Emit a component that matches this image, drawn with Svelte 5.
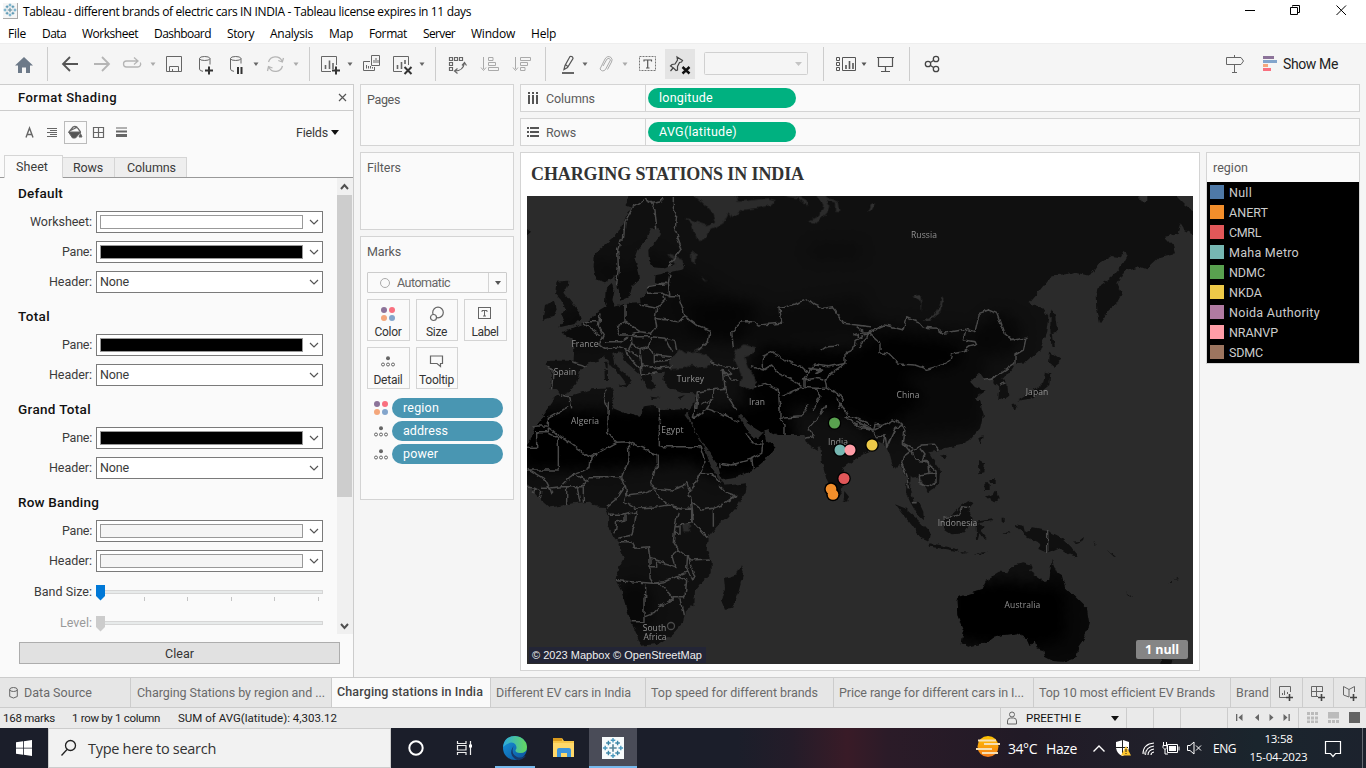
<script>
  // Tracks a label so that it fills exactly the given width in pixels.
  function fit(node, width) {
    const natural = node.getBoundingClientRect().width;
    const count = node.textContent.length;
    node.style.letterSpacing = (width - natural) / count + 'px';
  }

  const menus = [
    ['File', 18, 16], ['Data', 24, 16], ['Worksheet', 56, 16], ['Dashboard', 57, 16], ['Story', 27, 16],
    ['Analysis', 43, 16], ['Map', 24, 16], ['Format', 38, 16], ['Server', 32, 16], ['Window', 44, 16], ['Help', 25, 0]
  ];

  const sections = [
    { title: 'Default', w: 45, rows: [['Worksheet:', 62, '#fff'], ['Pane:', 30, '#000'], ['Header:', 43, null]] },
    { title: 'Total', w: 32, rows: [['Pane:', 30, '#000'], ['Header:', 43, null]] },
    { title: 'Grand Total', w: 73, rows: [['Pane:', 30, '#000'], ['Header:', 43, null]] },
    { title: 'Row Banding', w: 81, rows: [['Pane:', 30, '#f5f5f5'], ['Header:', 43, '#f5f5f5']] }
  ];

  const legend = [
    ['Null', '#4e79a7', 23], ['ANERT', '#f28e2b', 39], ['CMRL', '#e15759', 32], ['Maha Metro', '#76b7b2', 70],
    ['NDMC', '#59a14f', 36], ['NKDA', '#edc948', 33], ['Noida Authority', '#b07aa1', 91], ['NRANVP', '#ff9da7', 49], ['SDMC', '#9c755f', 34]
  ];

  const tabs = [
    ['Charging Stations by region and ...', 201, 188], ['Charging stations in India', 159, 146], ['Different EV cars in India', 155, 135],
    ['Top speed for different brands', 188, 167], ['Price range for different cars in I...', 200, 185],
    ['Top 10 most efficient EV Brands', 197, 175], ['Brand', 40, 33]
  ];

  const fields = [['region', 36, 'color'], ['address', 45, 'detail'], ['power', 35, 'detail']];

  const landNW = [
    'M320 130L300 165L325 175L308 185L295 220L270 260L240 285L210 312L206 350L215 388L240 397L268 378L275 400L285 430L285 452L312 440L320 412L345 388L338 350L328 325L337 300L365 265L378 235L405 235L404 255L385 280L370 300L372 330L385 352L420 355L450 342L480 345L478 358L430 368L392 375L390 395L408 402L370 408L365 430L348 442L350 460L300 462L270 470L262 450L268 420L260 402L242 420L240 460L245 470L225 482L205 500L180 520L150 532L112 548L118 556L140 565L145 595L143 632L70 632L65 647L80 662L76 712L95 722L105 738L130 728L155 700L165 665L190 640L220 632L240 618L255 645L285 675L305 702L320 692L300 668L268 642L262 612L285 603L305 638L340 668L360 700L378 722L392 714L382 695L380 668L420 665L415 690L430 715L470 728L512 730L514 745L505 790L1045 790L1045 130Z',
    'M95 395L130 392L128 410L118 428L142 460L165 488L170 505L155 520L103 532L120 508L108 494L125 480L108 450L90 430Z',
    'M60 465L90 452L95 478L85 500L53 510Z', 'M0 233L18 245L0 262Z', 'M320 698L305 712L280 705Z', 'M238 660h11v30h-9zM240 635h8v17h-6zM378 740L408 744L380 747ZM458 745L480 738L465 750Z',
    'M55 795L85 750L105 738L135 738L200 718L262 715L268 738L258 760L268 780L305 798Z'
  ];
  const landNE = [
    'M-20 130H940L975 165L1010 190V258L975 240L962 220L952 252L915 260L938 285L945 310L898 322L860 358L840 350L790 365L772 400L786 430L770 460L745 482L720 520L712 480L710 430L720 405L755 380L790 340L803 316L790 306L783 322L755 318L715 342L690 378L640 366L620 373L575 376L540 420L505 460L545 472L565 500L558 550L540 600L500 636L465 642L458 655L430 688L442 702L445 742L415 748L418 710L400 700L402 682L375 690L360 668L330 695L345 712L375 722L345 742L362 765L372 800L-20 800Z',
    'M573 475L586 500L592 545L578 550L585 590L574 590L571 530Z', 'M570 605L606 630L580 650L567 640Z',
    'M555 665L571 670L568 705L540 728L520 745L472 752L498 736L528 716L550 700Z', 'M455 762L470 760L466 780L458 778Z'
  ];
  const landSW = [
    'M95 -30L70 18L36 60L20 100L0 130V235L10 240L45 280L75 307L100 304L150 294L195 290L210 304L240 306L250 345L248 368L280 410L296 460L280 490L272 526L290 560L305 612L320 655L336 690L348 722L400 716L440 690L475 652L480 615L508 600L510 555L530 530L560 505L560 470L545 440L548 400L575 365L610 335L640 300L662 260L666 235L602 242L585 225L560 190L545 150L520 100L500 60L478 30L500 12L450 14L400 15L385 0L358 4L346 36L300 25L265 10L245 -30Z',
    'M505 -10L490 30L510 72L530 110L560 150L580 185L590 222L640 214L685 195L720 165L752 125L722 104L718 80L700 100L680 95L662 65L638 35L650 30L675 60L710 82L730 75L760 90L835 90L850 122L875 137L886 125L890 170L905 225L922 262L934 282L948 264L960 212L952 190L990 163L1045 130V-15Z',
    'M648 478L656 500L640 560L620 612L600 614L588 585L600 550L597 520L636 508Z', 'M958 258L972 275L966 290L956 286Z'
  ];
  const landSE = [
    'M-20 -15V155L25 140L52 108L76 120L90 152L100 190L122 180L132 197L140 230L138 262L150 290L170 325L192 346L190 320L176 290L162 288L150 258L152 215L170 212L185 228L204 262L240 235L243 200L225 175L205 142L240 135L252 130L300 121L330 105L360 70L369 30L360 -15Z',
    'M105 298L135 310L180 350L213 385L208 408L180 395L155 360L125 325Z', 'M208 415L240 420L290 432L297 440L255 432L210 425Z',
    'M250 345L280 325L305 300L325 285L340 298L325 315L335 345L315 385L275 388L255 375Z', 'M347 350L400 342L396 348L358 354L362 365L378 368L362 378L380 400L372 402L358 385L352 405H348Z',
    'M357 165L375 175L370 205L358 208Z', 'M372 235h14v20h-10zM390 222h14v12h-10zM378 275L410 260L416 280L405 293L382 280Z',
    'M465 358L490 362L495 382L520 370L570 380L600 395L630 425L655 455L630 450L600 430L565 445L535 432L542 415L500 395Z',
    'M635 410L660 408L675 396L672 406L650 414ZM700 410l10 8l-3 1zM740 435l28 20l-6 0zM798 562L820 578L808 574ZM925 537l14-6v5zM940 524l12-5v4z',
    'M290 585L300 575L365 555L380 525L420 500L445 502L460 478L490 472L517 480L510 500L555 532L568 525L575 465L590 500L605 510L615 545L650 580L680 610L687 650L675 695L655 725L650 755L610 770L580 768L555 755L550 735L530 730L525 705L510 722L500 700L470 685L430 690L395 700L380 712L325 725L305 715L312 680L292 630Z',
    'M355 100L368 94L362 120ZM240 152L262 148L250 165ZM458 0h14l-8 18zM905 762L938 765L932 782H900Z', 'M300 438l30 2l-20 3zM340 445l45 -5l-20 8zM428 335h6v18h-6zM420 385l32 -4l-10 6z'
  ];
  const waterNW = 'M500 130L540 165L562 190L570 215L545 225L515 215L478 203L500 225L505 245L520 277L545 265L555 240L592 225L610 190L620 205L650 180L692 175L740 165L752 150L730 145L640 155L630 130ZM775 138L820 145L850 170L845 150L815 135ZM875 130L895 165L885 195L848 214L875 220L905 190L913 165L905 150L930 158L930 185L943 187L938 155L905 142L900 130ZM445 620L462 597L480 610L500 605L545 612L562 635L540 655L500 645L475 655L436 657L430 642ZM500 605L525 590L535 600ZM632 600L655 583L690 592L684 610L658 622L670 652L690 685L695 712L670 722L645 705L650 680L638 650L625 625ZM498 300L515 315L512 340L498 335ZM425 310L470 325L478 345L455 350ZM528 378l18 18l-12-6z';
  const bordersNW = 'M275 405L280 350L278 300L285 270H295L300 215L325 170L365 145L390 180L395 235M365 150L380 160L410 155V138M445 138V170L455 200L450 240L470 295L430 350M435 370L430 400L435 440L415 430H365M430 400H400M415 430L420 450L395 475L345 465M435 440H460L475 480L480 500L460 515L390 505L395 475M480 500L520 530L555 545L550 575L520 600M300 465V515L345 545L380 550L395 530L390 505M225 490L220 530L235 555L225 580M300 515L275 530L285 555H320L345 545M320 555L330 560H375M240 575L285 575L310 560M220 580L240 595L285 590L310 600L320 580V560M320 580L345 600L370 590L380 560L420 565L440 605M370 590L385 615L440 620M425 565L450 572L455 600M300 605L320 630L345 655L350 680M345 600L350 640L385 655M310 600L340 620M385 615V635L440 630M385 655L440 650M350 640V675L395 665M175 520L225 555M180 515H215M140 635L185 648M68 652L85 660L80 715M555 635L600 650L640 655M595 660L600 715L520 725M590 660L620 690H640M600 680L620 672L610 662M600 715L605 735L625 765L635 780M520 725L515 780M570 720L565 745L530 765M105 735L135 740L140 775M240 720L235 745L250 780M625 595L620 545L650 515L690 515L700 525L770 520L765 475L800 465L850 448L870 465L895 475L920 470L940 495L955 520L1035 530M1035 545L990 575L985 600L960 610V640L910 650L870 645L850 670M680 650L715 660V615L740 605L780 630L830 650L850 670M690 710L720 700L760 720L765 780M715 660L740 645L760 670L800 690L830 710M770 740L830 712L870 715L905 715M850 670L835 690L870 685L895 690M840 690V710M870 670L890 660L850 655M905 715L945 735L955 750L940 780M870 715L885 735L865 780M960 640L925 665L900 690L905 715M890 600L905 590L945 588M985 555L1000 550V565M365 410L430 400';
  const bordersNE = 'M0 550L25 548L75 525L130 540L140 503L180 520L190 532L230 535L250 550L318 538L345 545L358 490L385 480L410 490L430 545L460 570L498 565L490 600L465 615V640L395 685L370 688M25 548L60 580V608L85 612L115 642L165 645L200 658L245 645L270 630L275 612L310 605L330 590L350 585L345 575L310 570L318 538M420 705L438 698M-5 590L20 565L25 548M-10 530L10 545';
  const bordersSW = 'M403 10V125H525M397 150L310 110L275 112L195 157L70 68M397 150V190H390L385 215L378 240L390 250M250 -10L248 80L275 112M90 95H100V195H5M90 95L70 85M70 68V80H35V130H5M22 63H70V40L130 5M310 112L312 160L290 215M195 157L192 190L150 205L125 225L105 245L70 250L55 220L5 190M150 205L185 230L190 215H290M125 245V300M105 245H175M155 240L165 290M190 225L175 240V290M290 215L300 240L270 285L245 305M300 240L305 265L298 290L330 310L400 305L430 300L470 310M305 270L350 265L390 250L400 275L430 300M390 250L440 255L480 240L485 230L495 265L510 235L525 205M490 265L500 290L530 315L565 310L590 300L632 272L605 262L580 240M525 205H560L585 235M525 125L540 170L525 205M500 290L505 350L548 400M470 310H500V350L460 360M565 315V365M460 320L450 365L445 410L460 435L500 465L555 462M280 410H320L330 430L370 425L375 460L440 480L450 485L440 450L460 435M250 328H300V345L275 350L270 385M300 330L335 320L330 350L320 390L280 400M375 460V485H395M395 470V485M375 485V520L385 535M275 527L385 535L420 530L455 515L490 500M362 540V580H357V650H320M385 535H405L445 580L405 605L385 625L360 635M455 515L485 525L480 575H445M490 450L500 490L510 520L500 525L485 490L488 450M465 580L475 630M450 365H465V385H450M515 -10L505 40L540 15L560 -15M540 10L600 30L640 50M685 160L620 180L585 175V190M685 195L680 160L710 145L715 105M710 118L682 116L665 85M765 -10V40L780 60V90M765 40L830 35L845 10V-5M905 0L880 35L850 70L865 95L840 100M1035 75L985 55L960 35L985 35L1035 60M935 -20L970 30M0 245L30 250L50 260L45 280M30 250L25 265M50 250H75L80 265';
  const bordersSE = 'M-10 50L40 75L100 45L125 55L135 75L130 115L160 130M-10 70L40 75L45 58L70 62M35 78L50 95L75 92L70 115M75 92L80 125L105 70L125 60M130 115L150 140L130 155L125 175L140 210L145 250M150 140L185 120L220 118L235 135M155 135L165 165L205 170L210 205H228M180 130L195 150L190 165L228 195V230L200 245L180 235L178 210L210 205M155 290H170M250 340L295 330L305 305L330 308M563 375V445';

  const places = [
    ['Russia', 924, 237.5], ['France', 585, 346.5], ['Spain', 565, 374.5], ['Turkey', 690.5, 381.5], ['Iran', 757, 405], ['China', 908, 397.5],
    ['Japan', 1037, 394.5], ['Algeria', 585, 423.5], ['Egypt', 672.5, 432.5], ['India', 838, 445], ['Indonesia', 957.5, 525.5], ['Australia', 1022.5, 608],
    ['South', 654.5, 630.5], ['Africa', 655, 640]
  ];
  const dots = [
    [834.5, 423, '#59a14f'], [840, 450, '#76b7b2'], [850, 450, '#ff9da7'], [872, 445, '#edc948'], [844, 478.5, '#e15759']
  ];
</script>

{#snippet down(x, y, color)}
  <path d="M{x - 2.5} {y - 1.5}h5l-2.5 3.5z" fill={color} stroke="none" />
{/snippet}

{#snippet fourDots()}
  <svg width="14" height="14" viewBox="0 0 14 14">
    <circle cx="3" cy="3" r="3" fill="#8c7399" /><circle cx="11" cy="3" r="3" fill="#f9707f" />
    <circle cx="3" cy="11" r="3" fill="#f4a77c" /><circle cx="11" cy="11" r="3" fill="#83a5cc" />
  </svg>
{/snippet}

{#snippet detailDots()}
  <svg width="14" height="11" viewBox="0 0 14 11">
    <circle cx="7" cy="2.2" r="2" fill="#666" />
    <g fill="none" stroke="#666"><circle cx="2" cy="8.5" r="1.5" /><circle cx="7" cy="8.5" r="1.5" /><circle cx="12" cy="8.5" r="1.5" /></g>
  </svg>
{/snippet}

{#snippet tableauMark(size)}
  <svg width={size} height={size} viewBox="0 0 24 24">
    <path d="M12 8v8M8 12h8" stroke="#59879b" stroke-width="1.8" />
    <path d="M12 1v5M9.500 3.500h5M12 18v5M9.500 20.500h5M1 12h5M3.500 9.500v5M18 12h5M20.500 9.500v5" stroke="#4a98bd" stroke-width="1.500" />
    <path d="M7 4v5M4.500 6.500h5M17 4v5M14.500 6.500h5M7 15v5M4.500 17.500h5M17 15v5M14.500 17.500h5" stroke="#3d86a6" stroke-width="1.500" />
  </svg>
{/snippet}

<div class="screen">
  <header class="titlebar">
    <span class="appicon">{@render tableauMark(14)}</span>
    <span class="t" use:fit={448}>Tableau - different brands of electric cars IN INDIA - Tableau license expires in 11 days</span>
    <svg class="wincontrols" width="126" height="22" viewBox="1240 0 126 22" fill="none" stroke="#000">
      <path d="M1245 10.500h10M1292.500 6.500V5.500h7v7h-2M1290.500 7.500h7v7h-7zM1336.500 5.500l9.500 9.500M1346 5.500L1336.500 15" />
    </svg>
  </header>

  <nav class="menubar">
    {#each menus as [label, w, gap]}
      <span style:margin-right="{gap}px"><span class="t" use:fit={w}>{label}</span></span>
    {/each}
  </nav>

  <div class="toolbar">
    <svg width="47" height="40" viewBox="0 44 47 40"><path d="M15 65.500L24 57l9 8.500h-3V73h-4v-5.500h-4V73h-4v-7.500z" fill="#6c7988" /></svg>
    <svg class="sep" width="262" height="40" viewBox="47 44 262 40" fill="none" stroke="#666">
      <path d="M78 64H63M70 57l-7 7 7 7" stroke="#555" stroke-width="1.800" />
      <path d="M94 64h15M102 57l7 7-7 7" stroke="#b5b5b5" stroke-width="1.800" />
      <path d="M138 61h-11.500a3 3 0 0 0 0 6h11a3 3 0 0 0 2.800-4.500M134 57.500l4 3.500-4 3.500" stroke="#b5b5b5" stroke-width="1.300" />
      {@render down(153, 64, '#aaa')}
      <path d="M166.500 56.500h15v15h-15zM169.500 71.500v-5h9v5M172.500 69v2.500" />
      <path d="M199.500 58.500v10.500q0 2 3.500 2.300M210 58.500v6" /><ellipse cx="204.700" cy="58.500" rx="5.200" ry="2" />
      <path d="M205 70.500h8M209 66.500v8" stroke="#333" stroke-width="2" />
      <path d="M230.500 58.500v10.500q0 2 3.500 2.300M241 58.500v5" /><ellipse cx="235.700" cy="58.500" rx="5.200" ry="2" />
      <path d="M238 67v7M241.500 67v7" stroke="#333" stroke-width="2" />
      {@render down(256, 64, '#666')}
      <path d="M268.500 62a7.300 7.300 0 0 1 13.500-1M282.500 66a7.300 7.300 0 0 1-13.500 1.500M283.500 58l-1.200 4-4-1.500M267.500 71l1-4.500 4 1.500" stroke="#b5b5b5" stroke-width="1.300" />
      {@render down(296, 64, '#aaa')}
    </svg>
    <svg class="sep" width="126" height="40" viewBox="309 44 126 40" fill="none" stroke="#666">
      <path d="M331 71.500h-9.500v-15h15V65" /><path d="M325.500 65v4M329.500 60.500v8.500M333 63v6" stroke-width="1.600" />
      <path d="M332 70.500h8M336 66.500v8" stroke="#333" stroke-width="2" />{@render down(350, 64, '#666')}
      <path d="M371.500 55.500h8v10h-8zM370 61.500h-6.500v9h11V67M374 60v3M376 58v5M378 60v3M366.500 65v3.500M368.500 66v2.500M370.500 66v2.500M372.500 67v1.500" />
      <path d="M402 71.500h-8.500v-15h15V65" /><path d="M397.500 65v4M401.500 62v7M405 60v4" stroke-width="1.600" />
      <path d="M404.500 67l7 7M411.500 67l-7 7" stroke="#333" stroke-width="2" />{@render down(422, 64, '#666')}
    </svg>
    <svg class="sep" width="110" height="40" viewBox="435 44 110 40" fill="none" stroke="#666">
      <path d="M449.500 57.500h3v3h-3zM454.500 57.500h3v3h-3zM459.500 57.500h3v3h-3zM449.500 62.500h3v3h-3zM449.500 67.500h3v3h-3zM455 71q8 0 9.500-8M457.500 68.500l-3 2.500 3 2.500M462 65.500l2.500-3 2 3" stroke-width="1.200" />
      <path d="M483.500 57v12M481 67.500l2.500 3 2.500-3M488.500 57.500h4.500v3h-4.500zM488.500 62.500h7v3h-7zM488.500 67.500h10v3h-10zM515.500 57v12M513 67.500l2.500 3 2.500-3M520.500 57.500h10v3h-10zM520.500 62.500h7v3h-7zM520.500 67.500h4.500v3h-4.500z" stroke="#aaa" />
    </svg>
    <svg class="sep" width="278" height="40" viewBox="545 44 278 40" fill="none" stroke="#555">
      <path d="M564 69.500l1-4 5-9q3-.5 3 2l-5.500 9zM566 65l2.500 2" stroke-width="1.200" /><path d="M562 73h12" stroke="#666" stroke-width="2" />{@render down(585, 64, '#666')}
      <path d="M603 66l4-7q2.500-2 3.500 1l-5 9.500q-3 3-5.500-.5l5-10q2.500-4 6-1.500 2 2 .5 4.500l-4 7.500" stroke="#aaa" />{@render down(625, 64, '#aaa')}
      <rect x="639.500" y="56.500" width="16" height="14" stroke="#777" stroke-dasharray="2 1" />
      <path d="M644 61.500v-1.500h7.500v1.500M647.700 60v8M646 68h3.500" stroke-width="1.200" />
      <rect x="665" y="49" width="30" height="30" fill="#e4e4e4" stroke="none" />
      <path d="M677 57l5.500 3.500-1 1.500-2 .5-2 4v3.500l-1.500.5-2.500-2.500-3-2 1.500-1.500 3-.5 2.500-4zM673.500 67.500l-3 3.500" stroke="#444" stroke-width="1.200" />
      <path d="M682.500 67l7 6.500M689.500 67l-7 6.500" stroke="#111" stroke-width="2.400" />
      <rect x="704.500" y="52.500" width="103" height="22" rx="1" stroke="#d0d0d0" />
      <path d="M795 62h7l-3.500 4z" fill="#c4c4c4" stroke="none" />
    </svg>
    <svg class="sep" width="86" height="40" viewBox="823 44 86 40" fill="none" stroke="#555">
      <path d="M836.500 57.500h3v3h-3zM836.500 62.500h3v3h-3zM836.500 67.500h3v3h-3zM842.500 57.500h13v13h-13z" /><path d="M846 65v4M849.500 61v8M853 63v6" stroke-width="1.600" />
      {@render down(864, 64, '#555')}
      <path d="M877 57.500h17M878.500 58v8.500h14V58M885.500 66.500v5M881 71.500h9" stroke-width="1.200" />
    </svg>
    <svg class="sep" width="51" height="40" viewBox="909 44 51 40" fill="none" stroke="#444" stroke-width="1.300">
      <circle cx="928" cy="64" r="2.700" /><circle cx="936" cy="59" r="2.700" /><circle cx="936" cy="69" r="2.700" /><path d="M930.500 62.500l3-2M930.500 65.500l3 2" />
    </svg>
    <div class="showme">
      <svg width="57" height="40" viewBox="1226 44 57 40" fill="none">
        <path d="M1234.500 55v2M1226.500 57.500h14.500l2.500 3.500-2.500 3.500h-14.500zM1234.500 64.500v8M1232 72.500h5" stroke="#666" />
        <path d="M1263 57.500h11" stroke="#8c7399" stroke-width="3" /><path d="M1263 61.500h14" stroke="#83a5cc" stroke-width="3" />
        <path d="M1263 65.500h5" stroke="#f4a77c" stroke-width="3" /><path d="M1263 69.500h8" stroke="#f9707f" stroke-width="3" />
      </svg>
      <span class="t" use:fit={55}>Show Me</span>
    </div>
  </div>

  <main class="work">
    <aside class="format">
      <div class="formathead">
        <b class="t" use:fit={99}>Format Shading</b>
        <svg width="9" height="9" viewBox="0 0 9 9"><path d="M1 1l7 7M8 1L1 8" stroke="#555" stroke-width="1.200" /></svg>
      </div>
      <div class="kinds">
        <svg width="120" height="24" viewBox="18 120 120 24" fill="none" stroke="#666">
          <path d="M26 137.500l3.500-9.500 3.500 9.500M27 134.500h5" stroke-width="1.400" />
          <path d="M47 128.500h10M50 130.500h7M47 132.500h10M50 134.500h7M47 136.500h10" />
          <rect x="64.500" y="121.500" width="22" height="22" stroke="#bbb" />
          <path d="M69 132l4-5q3-1.500 5 1.500l2.500 3.500M69.500 131l8-4" stroke-width="1.300" /><path d="M68.500 132h12.500l-5.500 6h-3z" fill="#555" /><path d="M80.500 133.500l1.500 3.500h-3z" fill="#555" />
          <path d="M93.500 127.500h10v10h-10zM98.500 127.500v10M93.500 132.500h10" stroke-width="1.200" />
          <path d="M116 128h11" /><path d="M116 131.500h11" stroke-width="2" /><path d="M116 135.500h11" stroke-width="3" />
        </svg>
        <span class="fieldsmenu"><span class="t" use:fit={32}>Fields</span><i></i></span>
      </div>
      <div class="ptabs">
        <span class="ptab on"><span class="t" use:fit={32}>Sheet</span></span>
        <span class="ptab rowstab"><span class="t" use:fit={30}>Rows</span></span>
        <span class="ptab colstab"><span class="t" use:fit={49}>Columns</span></span>
      </div>
      <div class="scroller">
        <div class="settings">
          {#each sections as s}
            <h3><span class="t" use:fit={s.w}>{s.title}</span></h3>
            {#each s.rows as [label, w, fill]}
              <div class="setting">
                <label><span class="t" use:fit={w}>{label}</span></label>
                <div class="combo">
                  {#if fill}<i style:background={fill}></i>{:else}<span class="t" use:fit={29}>None</span>{/if}
                  <svg width="10" height="6" viewBox="0 0 10 6"><path d="M1 1l4 4 4-4" fill="none" stroke="#555" stroke-width="1.200" /></svg>
                </div>
              </div>
            {/each}
          {/each}
          <div class="slide">
            <label><span class="t" use:fit={58}>Band Size:</span></label>
            <svg width="227" height="31" viewBox="96 580 227 31"><rect x="96.500" y="590.500" width="226" height="3" fill="#e7eaea" stroke="#d6d6d6" /><path d="M96 585h9v11l-4.500 4.500L96 596z" fill="#0078d7" /><path d="M144.500 597v4M187.500 597v4M231.500 597v4M274.500 597v4M318.500 597v4" stroke="#c4c4c4" /></svg>
          </div>
          <div class="slide off">
            <label><span class="t" use:fit={32}>Level:</span></label>
            <svg width="227" height="31" viewBox="96 580 227 31"><rect x="96.500" y="590.500" width="226" height="3" fill="#e7eaea" stroke="#d6d6d6" /><path d="M96 585h9v11l-4.500 4.500L96 596z" fill="#ccc" /></svg>
          </div>
        </div>
        <div class="bar">
          <svg width="16" height="17" viewBox="0 0 16 17"><path d="M4 11l3.500-4 3.500 4" fill="none" stroke="#505050" stroke-width="2" /></svg>
          <i></i>
          <svg width="16" height="17" viewBox="0 0 16 17"><path d="M4 7l3.500 4L11 7" fill="none" stroke="#505050" stroke-width="2" /></svg>
        </div>
      </div>
      <button class="clear"><span class="t" use:fit={29}>Clear</span></button>
    </aside>

    <section class="cards">
      <div class="card pages"><span class="t" use:fit={33}>Pages</span></div>
      <div class="card filters"><span class="t" use:fit={34}>Filters</span></div>
      <div class="card marks">
        <div class="markstitle"><span class="t" use:fit={34}>Marks</span></div>
        <div class="marktype"><i></i><span class="t" use:fit={53}>Automatic</span><em></em></div>
        <div class="markgrid">
          <div><span class="ic">{@render fourDots()}</span><span class="t" use:fit={27}>Color</span></div>
          <div><span class="ic"><svg width="16" height="16" viewBox="0 0 16 16" fill="none" stroke="#666" stroke-width="1.200"><circle cx="9" cy="6.500" r="5.300" /><circle cx="4.500" cy="11.500" r="3" fill="#fafafa" /></svg></span><span class="t" use:fit={21}>Size</span></div>
          <div><span class="ic"><svg width="14" height="13" viewBox="0 0 14 13" fill="none" stroke="#666"><rect x=".5" y=".5" width="12" height="11" /><path d="M4 5V3.500h5V5M6.500 3.500v5.500M5 9h3" /></svg></span><span class="t" use:fit={27}>Label</span></div>
          <div><span class="ic">{@render detailDots()}</span><span class="t" use:fit={29}>Detail</span></div>
          <div><span class="ic"><svg width="15" height="13" viewBox="0 0 15 13" fill="none" stroke="#666" stroke-width="1.200"><path d="M1.500 1h12v7.500h-2v3l-3.500-3H1.500z" /></svg></span><span class="t" use:fit={35}>Tooltip</span></div>
        </div>
        {#each fields as [name, w, kind]}
          <div class="field">
            <span>{#if kind === 'color'}{@render fourDots()}{:else}{@render detailDots()}{/if}</span>
            <div class="pill blue"><span class="t" use:fit={w}>{name}</span></div>
          </div>
        {/each}
      </div>
    </section>

    <section class="viz">
      <div class="shelf">
        <div class="shelfname"><svg width="12" height="12" viewBox="0 0 12 12" stroke="#555" stroke-width="2"><path d="M2 0v2M6 0v2M10 0v2M2 3v9M6 3v9M10 3v9" /></svg><span class="t" use:fit={49}>Columns</span></div>
        <div class="pill green"><span class="t" use:fit={54}>longitude</span></div>
      </div>
      <div class="shelf">
        <div class="shelfname"><svg width="12" height="12" viewBox="0 0 12 12" stroke="#555" stroke-width="2"><path d="M0 2h2M0 6h2M0 10h2M3 2h9M3 6h9M3 10h9" /></svg><span class="t" use:fit={30}>Rows</span></div>
        <div class="pill green"><span class="t" use:fit={78}>AVG(latitude)</span></div>
      </div>
      <div class="canvas">
        <div class="sheet">
          <h1><span class="t" use:fit={273}>CHARGING STATIONS IN INDIA</span></h1>
          <div class="map">
            <svg width="666" height="468" viewBox="527 196 666 468">
              <defs>
                <clipPath id="land">
                  {#each landNW as d}<path {d} transform="translate(525 150) scale(.33333)" />{/each}
                  {#each landNE as d}<path {d} transform="translate(860 150) scale(.33333)" />{/each}
                  {#each landSW as d}<path {d} transform="translate(525 405) scale(.33333)" />{/each}
                  {#each landSE as d}<path {d} transform="translate(860 405) scale(.33333)" />{/each}
                </clipPath>
                <filter id="rough" filterUnits="userSpaceOnUse" x="507" y="176" width="706" height="508" color-interpolation-filters="sRGB">
                  <feTurbulence type="fractalNoise" baseFrequency=".16" numOctaves="2" seed="4" result="n" />
                  <feDisplacementMap in="SourceGraphic" in2="n" scale="5" xChannelSelector="R" yChannelSelector="G" />
                </filter>
                <filter id="soft" x="-30%" y="-30%" width="160%" height="160%"><feGaussianBlur stdDeviation="7" /></filter>
              </defs>
              <rect x="527" y="196" width="666" height="468" fill="#2b2b2b" />
              <g filter="url(#rough)">
                <g clip-path="url(#land)">
                  <rect x="500" y="170" width="720" height="520" fill="#101010" />
                  <g filter="url(#soft)" fill="#000">
                    <path d="M520 410H720L790 400 800 470 720 480 690 462 600 470H520Z" />
                    <path d="M760 345L850 350L890 335L960 345L960 365L900 375L925 400L880 430L820 410L740 400Z" opacity=".9" />
                    <ellipse cx="1000" cy="335" rx="22" ry="22" opacity=".5" />
                    <path d="M950 585L1010 580L1065 590L1065 640L1020 650L950 640Z" />
                    <path d="M1040 560L1095 590L1095 670L1030 670Z" opacity=".5" />
                    <path d="M690 305L760 300L740 345L690 335Z" opacity=".55" />
                    <path d="M810 245h50v12h-50zM590 260h30v20h-30zM680 300h60v12h-60z" opacity=".3" />
                    <ellipse cx="635" cy="605" rx="18" ry="25" opacity=".5" />
                    <path d="M650 250L760 310L860 295L880 335L560 350L560 320Z" opacity=".3" />
                    <path d="M860 320L990 330L980 430L860 440Z" opacity=".4" />
                  </g>
                </g>
                <path d={waterNW} transform="translate(525 150) scale(.33333)" fill="#2b2b2b" />
                <path d="M245 440L252 452L240 485L215 507L190 514L222 492L238 468ZM22 185L30 165L45 160L35 178ZM160 440L182 435L185 488L178 450ZM834 135H862V152L845 155Z" transform="translate(860 150) scale(.33333)" fill="#303030" />
                <path d="M470 355h25v25h-20z" transform="translate(525 405) scale(.33333)" fill="#2b2b2b" />
                <g fill="none" stroke="#4a4a4a" stroke-width="4.400" stroke-linejoin="round">
                  <path d={bordersNW} transform="translate(525 150) scale(.33333)" />
                  <path d={bordersNE} transform="translate(860 150) scale(.33333)" />
                  <path d={bordersSW} transform="translate(525 405) scale(.33333)" />
                  <path d={bordersSE} transform="translate(860 405) scale(.33333)" />
                </g>
              </g>
              <circle cx="671" cy="626" r="3.500" fill="none" stroke="#4a4a4a" stroke-width="1.300" />
              <g class="places">{#each places as [name, x, y]}<text {x} {y}>{name}</text>{/each}</g>
              <circle cx="835.500" cy="423" r="5" fill="#b07aa1" />
              {#each dots as [x, y]}<circle cx={x} cy={y} r="6.800" fill="#000" />{/each}
              <g fill="#000"><circle cx="831" cy="489" r="6.800" /><circle cx="833" cy="494.500" r="6.800" /></g>
              {#each dots as [x, y, c]}<circle cx={x} cy={y} r="5.500" fill={c} />{/each}
              <g fill="#f28e2b"><circle cx="831" cy="489" r="5.300" /><circle cx="833" cy="494.500" r="5.300" /></g>
            </svg>
            <span class="credit"><span class="t" use:fit={170}>© 2023 Mapbox © OpenStreetMap</span></span>
            <span class="nulls"><span class="t" use:fit={34}>1 null</span></span>
          </div>
        </div>
        <div class="legend">
          <div class="legendhead"><span class="t" use:fit={35}>region</span></div>
          <ul>
            {#each legend as [name, color, w]}<li><i style:background={color}></i><span class="t" use:fit={w}>{name}</span></li>{/each}
          </ul>
        </div>
      </div>
    </section>
  </main>

  <nav class="sheets">
    <div class="source"><svg width="9" height="12" viewBox="0 0 9 12" fill="none" stroke="#666"><ellipse cx="4.500" cy="2.500" rx="3.800" ry="2" /><path d="M.7 2.500v7q3.800 3 7.600 0v-7" /></svg><span class="t" use:fit={68}>Data Source</span></div>
    {#each tabs as [name, width, w], i}
      <div class="stab" class:on={i === 1} class:first={i === 0} style:width="{width}px"><span class="t" use:fit={w}>{name}</span></div>
    {/each}
    <div class="new"><svg width="16" height="16" viewBox="0 0 16 16" fill="none" stroke="#666"><path d="M8 12.500H1.500v-11h11V7M4.500 8v2M6.500 5.500V10M9.500 7v2" /><path d="M8 12.500h7M11.500 9v7" stroke="#444" stroke-width="1.600" /></svg></div>
    <div class="new"><svg width="16" height="16" viewBox="0 0 16 16" fill="none" stroke="#666"><path d="M8 11.500H1.500v-10h11V7M6.500 1.500v10M1.500 6.500h11" /><path d="M8 12.500h7M11.500 9v7" stroke="#444" stroke-width="1.600" /></svg></div>
    <div class="new"><svg width="16" height="16" viewBox="0 0 16 16" fill="none" stroke="#666"><path d="M7 12l-5.500-2V1.500l5.500 3 5.500-3V7M7 4.500V12" /><path d="M8 12.500h7M11.500 9v7" stroke="#444" stroke-width="1.600" /></svg></div>
  </nav>

  <footer class="status">
    <span class="s1"><span class="t" use:fit={52}>168 marks</span></span>
    <span class="s2"><span class="t" use:fit={88}>1 row by 1 column</span></span>
    <span class="s3"><span class="t" use:fit={159}>SUM of AVG(latitude): 4,303.12</span></span>
    <div class="user"><svg width="12" height="14" viewBox="0 0 12 14" fill="none" stroke="#666"><circle cx="6" cy="3.500" r="2.500" /><path d="M1.500 13V10q0-3 3-3h3q3 0 3 3v3z" /></svg><span class="t" use:fit={55}>PREETHI E</span><i></i></div>
    <div class="cell"></div><div class="cell"></div><div class="cell wide"></div>
    <svg width="138" height="20" viewBox="1228 708 138 20" fill="#666">
      <path d="M1236 714h1.300v7H1236zM1242.500 714v7l-4-3.500zM1259 714v7l-4-3.500zM1269.500 714v7l4-3.500zM1283.500 714v7l4-3.500zM1288.500 714h1.300v7h-1.300z" />
      <path d="M1298.500 708v20" stroke="#ccc" />
      <path d="M1307 712h3v3h-3zM1311 712h3v3h-3zM1315 712h3v3h-3zM1307 716.500h3v3h-3zM1311 716.500h3v3h-3zM1315 716.500h3v3h-3zM1307 720.500h3v2.500h-3zM1311 720.500h3v2.500h-3zM1315 720.500h3v2.500h-3zM1328 712h11v6.500h-11zM1328 720h3v3h-3zM1332 720h3v3h-3zM1336 720h3v3h-3z" fill="#bbb" /><path d="M1349 712h11v11h-11z" fill="#636363" />
    </svg>
  </footer>

  <div class="taskbar">
    <svg width="48" height="40" viewBox="0 728 48 40"><path d="M16 742.300l7-1v6.400h-7zM23.800 741.200l8.200-1.200v7.700h-8.200zM16 748.500h7v6.300l-7-1zM23.800 748.500H32v7.500l-8.200-1.200z" fill="#fff" /></svg>
    <div class="search"><svg width="20" height="20" viewBox="0 0 20 20" fill="none" stroke="#222" stroke-width="1.300"><circle cx="11.500" cy="7.500" r="5" /><path d="M8 11.500L2.500 17.500" /></svg><span class="t" use:fit={128}>Type here to search</span></div>
    <svg width="198" height="40" viewBox="391 728 198 40" fill="none">
      <circle cx="416" cy="748" r="6.700" stroke="#fff" stroke-width="2" />
      <path d="M457.500 741v2.500h8.500V741M457.500 755v-2.500h8.500v2.500M457.500 745.500h8.500v4.500h-8.500zM470.500 741v14" stroke="#eee" stroke-width="1.200" /><path d="M469 744.500h3v3h-3z" fill="#fff" />
      <defs>
        <linearGradient id="edgeTop" x1="0" x2="1"><stop offset="0" stop-color="#2caae0" /><stop offset="1" stop-color="#65d85c" /></linearGradient>
        <linearGradient id="edgeLow" x1="0" y1="0" x2="1" y2="1"><stop offset="0" stop-color="#1797dc" /><stop offset="1" stop-color="#0c4f9a" /></linearGradient>
      </defs>
      <circle cx="515" cy="748" r="12" fill="url(#edgeLow)" />
      <path d="M503 747q1-11 12-11 11 1 12 11 0 6-7 6-5 0-4.500-3 2-2 0-5.500-4-5-12.500 2.500z" fill="url(#edgeTop)" />
      <path d="M513.500 746q-3 8 3.500 11 4 1.500 8-1 1.300-1 0 1-5 5-10 2-7-5-1.500-13z" fill="#17386b" />
      <path d="M495 767h40" stroke="#76b9ed" stroke-width="2" />
      <path d="M553 738h9l2 3h10v16h-21z" fill="#f7c648" /><path d="M553 738h9v3h-9z" fill="#d99a1e" /><path d="M553 743h21v14h-21z" fill="#ffd869" /><path d="M557 757v-7q0-2 2-2h10q2 0 2 2v7h-4v-4h-6v4z" fill="#3d94db" />
    </svg>
    <div class="active"><span>{@render tableauMark(22)}</span></div>
    <div class="tray">
      <svg width="26" height="24" viewBox="975 736 26 24"><defs><linearGradient id="sun" x1="0" y1="0" x2="0" y2="1"><stop offset="0" stop-color="#ffc400" /><stop offset="1" stop-color="#f47a1a" /></linearGradient></defs><circle cx="988" cy="746.500" r="10.500" fill="url(#sun)" /><path d="M978 740.500h18M984 744h16M976 749h16M982 753h16" stroke="#f6dfb4" stroke-width="1.800" /></svg>
      <span class="temp"><span class="t" use:fit={29}>34°C</span></span>
      <span class="haze"><span class="t" use:fit={31}>Haze</span></span>
      <svg width="120" height="24" viewBox="1090 736 120 24" fill="none" stroke="#fff">
        <path d="M1093.500 751.500l5.500-5.500 5.500 5.500" stroke-width="1.400" />
        <path d="M1116 742l7-2 6 2v6q-1 6-6.500 8-5.500-2-6.500-8z" fill="#fff" stroke="none" /><path d="M1122.500 740v15M1116 747.500h12" stroke="#222" /><path d="M1126 746l5 9.500h-10z" fill="#ffc62e" stroke="none" /><path d="M1126 749v3M1126 753v1" stroke="#222" />
        <path d="M1143 754q0-10 11-11M1145.500 755q0-8 8.500-9M1148 755q0-5 6-6M1151 755q0-2.500 3-3" stroke-width="1.100" /><path d="M1143.500 754l2-4v5z" fill="#aaa" stroke="none" />
        <path d="M1167.500 744.500h10v8h-10zM1179 746.500v4M1163.500 742v3M1166.500 742v3M1163 745.500h4v2l-2 2-2-2zM1165 749v5h3" /><path d="M1169 746h7v5h-7z" fill="#fff" stroke="none" />
        <path d="M1187.500 745.500h2.500l4-3.500v12l-4-3.500h-2.500zM1196 745.500l5 5M1201 745.500l-5 5" />
      </svg>
      <span class="lang"><span class="t" use:fit={23}>ENG</span></span>
      <span class="clock"><span class="t" use:fit={28}>13:58</span><span class="t" use:fit={58}>15-04-2023</span></span>
      <svg width="52" height="40" viewBox="1314 728 52 40" fill="none"><path d="M1325.500 741.500h15v12h-5l-2.500 3-2.500-3h-5z" stroke="#fff" stroke-width="1.200" /><path d="M1362.500 728v40" stroke="#666a72" /></svg>
    </div>
  </div>
</div>

<style>
  :global(body) { background: #f5f5f5; overflow: hidden; }
  .screen { width: 1366px; height: 768px; display: flex; flex-direction: column; overflow: hidden; font: 12px Roboto, "Open Sans", sans-serif; color: #3a3a3a; box-sizing: border-box; }
  .screen :where(*) { box-sizing: border-box; }
  svg { display: block; flex: none; }
  .t { display: inline-block; white-space: nowrap; flex: none; }
  .titlebar { height: 22px; background: #fff; display: flex; align-items: center; color: #000; font-family: "Open Sans", sans-serif; padding-left: 3px; }
  .titlebar > .t { padding-top: 1px; }
  .appicon { width: 15px; height: 16px; border-right: 1px solid #aaa; border-bottom: 1px solid #aaa; background: #f5f5f5; margin: 0 5px 0 0; }
  .wincontrols { margin-left: auto; }
  .menubar { height: 21px; background: #fff; display: flex; align-items: center; padding: 2px 0 0 8px; color: #000; font-family: "Open Sans", sans-serif; }
  .menubar > span { display: flex; line-height: 19px; }
  .toolbar { height: 41px; background: #f5f5f5; border-top: 1px solid #eee; display: flex; }
  .sep { background: linear-gradient(#ccc, #ccc) 0 3px / 1px 34px no-repeat; }
  .showme { margin-left: auto; margin-right: 28px; display: flex; align-items: center; height: 40px; font-size: 14px; color: #222; }
  .work { height: 593px; display: flex; gap: 6px; background: #f5f5f5; }
  .format { width: 354px; height: 593px; background: #fafafa; border-top: 1px solid #ccc; border-right: 1px solid #ccc; display: flex; flex-direction: column; }
  .formathead { height: 26px; border-bottom: 1px solid #ccc; display: flex; align-items: center; justify-content: space-between; padding: 0 6px 1px 18px; font-size: 13px; color: #111; }
  b, h3 { font-weight: 500; }
  .kinds { height: 44px; display: flex; align-items: center; justify-content: space-between; padding: 0 14px 2px 18px; font-size: 12.500px; }
  .fieldsmenu { display: flex; align-items: center; gap: 3px; }
  .fieldsmenu i, .user i { border: 4px solid transparent; border-top: 5px solid #111; border-bottom: 0; }
  .ptabs { height: 23px; border-bottom: 1px solid #999; display: flex; align-items: flex-end; padding-left: 4px; font-size: 12.500px; }
  .ptab { height: 20px; background: #eee; border: 1px solid #d5d5d5; border-left: 0; border-bottom: 0; display: flex; align-items: center; padding-left: 7px; }
  .ptab.on { height: 23px; width: 59px; background: #fafafa; border-left: 1px solid #d5d5d5; margin-bottom: -1px; padding: 0 0 1px 11px; }
  .rowstab { width: 52px; padding-left: 10px; }
  .colstab { width: 72px; padding-left: 12px; }
  .scroller { height: 456px; display: flex; overflow: hidden; }
  .settings { width: 337px; height: 456px; overflow: hidden; }
  h3 { margin: 0; height: 33px; padding-left: 18px; line-height: 31px; font-size: 13.500px; color: #111; }
  .setting { height: 30px; display: flex; align-items: flex-start; }
  label { width: 96px; padding-right: 4px; display: flex; justify-content: flex-end; line-height: 21px; font-size: 12.500px; }
  .combo { width: 227px; height: 22px; border: 1px solid #7a7a7a; background: #fff; display: flex; align-items: center; justify-content: space-between; padding: 0 3px; font-size: 12.500px; }
  .combo i { width: 203px; height: 14px; border: 1px solid #999; }
  .combo .t { padding-bottom: 1px; }
  .slide { height: 31px; display: flex; }
  .slide label { line-height: 23px; }
  .off { color: #999; }
  .bar { width: 16px; background: #f0f0f0; display: flex; flex-direction: column; }
  .bar i { height: 302px; width: 15px; background: #cdcdcd; margin-bottom: auto; }
  .clear { margin: 8px 0 0 19px; width: 321px; height: 22px; padding: 0; border: 1px solid #adadad; background: #e1e1e1; color: #333; font: 12.500px Roboto, sans-serif; }
  .cards { width: 154px; display: flex; flex-direction: column; gap: 6px; }
  .card { border: 1px solid #d4d4d4; background: #fafafa; padding: 0 6px; color: #5a5a5a; font-size: 12.500px; line-height: 30px; }
  .pages { height: 62px; }
  .filters { height: 78px; }
  .marks { height: 264px; }
  .markstitle { height: 35px; }
  .marktype { height: 21px; width: 140px; border: 1px solid #ccc; border-radius: 1px; display: flex; align-items: center; line-height: 19px; color: #666; }
  .marktype i { width: 10px; height: 10px; border: 1.500px solid #aaa; border-radius: 50%; margin: 0 7px 0 12px; }
  .marktype em { margin-left: auto; width: 18px; height: 19px; border-left: 1px solid #d4d4d4; display: flex; align-items: center; justify-content: center; }
  .marktype em::after { content: ""; border: 3.500px solid transparent; border-top: 4px solid #555; border-bottom: 0; }
  .markgrid { margin-top: 6px; width: 140px; display: grid; grid-template-columns: 43px 42px 43px; grid-auto-rows: 42px; gap: 6px; margin-bottom: 9px; }
  .markgrid > div { border: 1px solid #d4d4d4; display: flex; flex-direction: column; align-items: center; line-height: 14px; color: #333; font-size: 12px; padding-right: 1px; }
  .ic { height: 25px; display: flex; align-items: center; padding-top: 2px; }
  .field { height: 20px; margin-bottom: 3px; display: flex; align-items: center; padding-left: 7px; }
  .field > span { width: 18px; }
  .pill { border-radius: 10px; height: 20px; color: #fff; font-size: 12.500px; line-height: 20px; padding-left: 11px; }
  .blue { width: 111px; background: #4996b2; }
  .green { width: 148px; margin: 3px 0 0 2px; background: #00b180; }
  .viz { width: 840px; display: flex; flex-direction: column; gap: 6px; }
  .shelf { height: 28px; border: 1px solid #d4d4d4; background: #fafafa; display: flex; }
  .shelfname { width: 125px; border-right: 1px solid #d4d4d4; display: flex; align-items: center; gap: 7px; padding-left: 6px; font-size: 12.500px; color: #5a5a5a; }
  .canvas { display: flex; gap: 6px; align-items: flex-start; }
  .sheet { width: 680px; height: 519px; background: #fff; border: 1px solid #d4d4d4; padding: 0 6px; }
  h1 { margin: 0; height: 43px; padding-left: 4px; font: bold 18px/43px "Liberation Serif", serif; color: #333; }
  .map { position: relative; width: 666px; height: 468px; overflow: hidden; }
  .places { font: 8.500px "Open Sans", sans-serif; fill: #929292; text-anchor: middle; letter-spacing: .1px; }
  .credit { position: absolute; left: 2px; bottom: 1px; height: 16px; width: 177px; padding-left: 3px; background: #232536; color: #eee; font: 11px/17px "Liberation Sans", sans-serif; }
  .nulls { position: absolute; left: 609px; top: 444px; width: 52px; height: 19px; border-radius: 2px; background: #858585; color: #fff; font: bold 12.500px/19px "Open Sans", sans-serif; text-align: center; }
  .legend { width: 154px; height: 212px; border: 1px solid #d4d4d4; background: #fafafa; }
  .legendhead { height: 29px; padding-left: 6px; line-height: 30px; color: #5a5a5a; font-size: 12.500px; }
  ul { margin: 0; padding: 0 0 0 3px; list-style: none; background: #000; height: 181px; color: #ccc; font-size: 12.500px; }
  li { height: 20px; display: flex; align-items: center; gap: 5px; }
  li i { width: 14px; height: 14px; }
  .sheets { height: 31px; background: #e6e6e6; border-top: 1px solid #ccc; border-bottom: 1px solid #ccc; display: flex; color: #6a6a6a; font-size: 12.500px; }
  .source { width: 131px; border-right: 1px solid #ccc; display: flex; align-items: center; gap: 6px; padding-left: 9px; }
  .stab { border-right: 1px solid #ccc; padding-left: 5px; display: flex; align-items: center; flex: none; overflow: hidden; }
  .stab.first { padding-left: 6px; }
  .stab.on { background: #fafafa; color: #444; font-weight: 500; padding-bottom: 3px; }
  .new { flex: 1; border-right: 1px solid #ccc; display: flex; align-items: center; justify-content: center; }
  .status { height: 20px; background: #eaeaea; display: flex; align-items: center; color: #222; font-size: 11.500px; }
  .s1 { padding-left: 3px; width: 72px; }
  .s2 { width: 106px; }
  .user { margin-left: auto; width: 127px; height: 20px; border-left: 1px solid #ccc; border-right: 1px solid #ccc; display: flex; align-items: center; padding-left: 5px; gap: 8px; color: #111; }
  .user i { margin-left: 22px; }
  .cell { width: 27px; height: 20px; border-right: 1px solid #ccc; }
  .wide { width: 47px; }
  .taskbar { height: 40px; display: flex; background: linear-gradient(90deg, #1b1e2a 0 54%, #241c29 58%, #391b27 62%, #2b1b28 65%, #211a26 75%, #20202a 85%, #1a252d 92%, #1c222d); color: #fff; font-family: "Open Sans", sans-serif; }
  .search { width: 343px; background: #f2f2f2; border: 1px solid #ccc; display: flex; align-items: center; gap: 9px; padding-left: 10px; color: #333; font-size: 14.500px; }
  .active { width: 48px; background: #4a4c58; border-bottom: 2px solid #76b9ed; display: flex; justify-content: center; align-items: center; padding: 2px 1px 0 0; }
  .active span { background: #f7fafb; width: 22px; height: 22px; display: block; }
  .tray { margin-left: auto; display: flex; align-items: center; }
  .temp { font-size: 14px; padding-left: 7px; width: 45px; }
  .haze { font-size: 14px; width: 44px; }
  .lang { width: 33px; padding-left: 3px; }
  .clock { width: 71px; display: flex; flex-direction: column; align-items: center; line-height: 18px; font-size: 11.500px; }
</style>
